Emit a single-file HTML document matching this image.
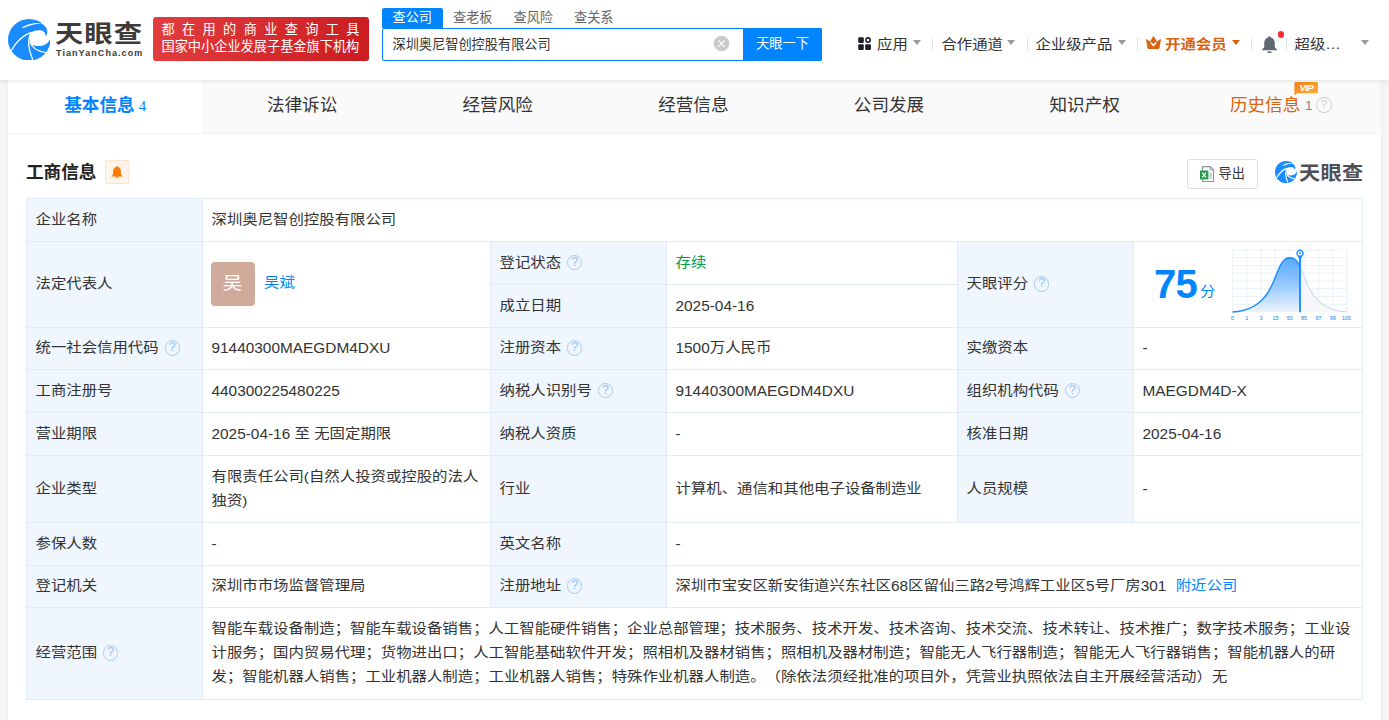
<!DOCTYPE html>
<html lang="zh-CN">
<head>
<meta charset="utf-8">
<title>天眼查</title>
<style>
*{box-sizing:border-box;margin:0;padding:0}
html,body{width:1389px;height:720px;overflow:hidden}
body{background:#f5f5f5;font-family:"Liberation Sans","Noto Sans CJK SC",sans-serif;font-size:15.4px;color:#333;position:relative;text-spacing-trim:space-all}
a{color:#0084ff;text-decoration:none}
.abs{position:absolute}
/* header */
#hd{position:absolute;left:0;top:0;width:1389px;height:80px;background:#fff;box-shadow:0 1px 4px rgba(0,0,0,.10);z-index:5}
#logo-txt{position:absolute;left:55px;top:16px;font-size:24px;line-height:36px;font-weight:700;color:#3e3a39;letter-spacing:.85px;white-space:nowrap;transform:scaleX(1.18);transform-origin:0 0}
#logo-sub{position:absolute;left:56px;top:47.3px;font-size:9px;line-height:12px;font-weight:700;color:#3e3a39;letter-spacing:1.07px;white-space:nowrap}
#slogan{position:absolute;left:153px;top:17px;width:216px;height:44px;border-radius:3px;background:linear-gradient(100deg,#e23d3f,#cb1c20);color:#fff;font-size:13.2px;line-height:17.6px;padding:3.5px 0 0 8.5px;white-space:nowrap}
#slogan .l1{letter-spacing:7.35px}
#slogan .l2{letter-spacing:0}
#stabs{position:absolute;left:382px;top:8px;height:20px;white-space:nowrap;font-size:13.2px;line-height:19px;color:#666}
#stabs span{display:inline-block;height:20px;width:60.5px;text-align:center}
#stabs span.on{background:#0084ff;color:#fff;border-radius:2px 2px 0 0}
#sbox{position:absolute;left:382px;top:28px;width:440px;height:33px;border:1px solid #0084ff;border-radius:2px;background:#fff}
#sbox .qq{position:absolute;left:9.5px;top:0;line-height:31px;font-size:13.2px;color:#333}
#sbox .btn{position:absolute;right:-1px;top:-1px;width:79px;height:33px;background:#0084ff;color:#fff;font-size:13.2px;line-height:32px;text-align:center;border-radius:0 2px 2px 0}
#nav{position:absolute;top:32.8px;left:0;height:24px;line-height:24px;font-size:15.4px;color:#333;white-space:nowrap}
#nav .it{position:absolute;top:0;white-space:nowrap;transform:scaleY(.89);transform-origin:50% 48%}
.caret{position:absolute;top:39.9px;width:0;height:0;border-left:4px solid transparent;border-right:4px solid transparent;border-top:5px solid #999}
.sep{position:absolute;top:38px;width:1px;height:13px;background:#e3e3e3}
/* container */
#wrap{position:absolute;left:8px;top:80px;width:1373px;height:640px;background:#fff;box-shadow:0 0 3px rgba(0,0,0,.05)}
#tabs{position:absolute;left:0;top:0;width:1373px;height:54px;background:#fafafa;border-bottom:1px solid #f3f3f3}
#tabs .t{position:absolute;top:0;height:53px;line-height:50px;font-size:17.6px;color:#333;text-align:center;width:195.65px;white-space:nowrap}
#tabs .t.on{background:#fff;color:#0084ff;font-weight:700;border-right:1px solid #f3f3f3}
#tabs .t .n{font-family:"Liberation Serif",serif;font-size:15.4px;font-weight:400;margin-left:4px}
#ttl{position:absolute;left:18px;top:80px;font-size:17.6px;font-weight:700;line-height:24px;color:#222;white-space:nowrap}
#bell{position:absolute;left:97px;top:80px;width:24px;height:24px;border:1px solid #ffe3cc;border-radius:2px;background:#fff4ea}
#exp{position:absolute;left:1179px;top:79px;width:71px;height:30px;border:1px solid #dedede;border-radius:2.5px;background:#fff;font-size:13.2px;line-height:28px;color:#333}
/* table */
table{position:absolute;left:18px;top:118px;width:1337px;border-collapse:collapse;table-layout:fixed;font-size:15.4px}
td{border:1px solid #e1ecf7;padding:0 8.5px;line-height:24.2px;color:#333;vertical-align:middle;overflow:hidden}
td.k{background:#eff6fe}
.q{display:inline-block;width:15.4px;height:15.4px;border:1.1px solid #a6cbf2;border-radius:50%;color:#93c0f0;font-size:12.5px;line-height:13.6px;text-align:center;vertical-align:middle;margin-left:6px;position:relative;top:-1.3px;font-family:"Liberation Sans",sans-serif}
.c{display:inline-block;transform:scaleY(.89);transform-origin:50% 48%}
.cm{transform:scaleY(.89);transform-origin:50% 50%;line-height:27.19px;position:relative;top:-.8px}
</style>

</head>
<body>
<div id="hd">
  <svg class="abs" style="left:7.8px;top:18.5px" width="42.4" height="41.7" viewBox="55 60 610 610" preserveAspectRatio="none"><circle cx="360" cy="365" r="305" fill="#1a8cff"/><path fill="#fff" d="M385,256 C440,222 520,212 562,240 C588,260 598,285 598,315 C640,250 625,170 528,122 L600,60 L720,200 L720,345 L662,343 C640,420 555,482 405,444 C368,405 360,330 385,256 Z"/><path fill="#fff" d="M250,188 C330,136 430,108 532,121 C440,132 350,156 272,192 Z"/><path fill="none" stroke="#fff" stroke-width="19" d="M100,525 C170,400 270,300 388,256"/><path fill="none" stroke="#fff" stroke-width="19" d="M386,256 C345,340 335,480 412,655"/><path fill="none" stroke="#fff" stroke-width="21" d="M372,395 C400,480 480,535 595,548"/></svg>
  <div id="logo-txt">天眼查</div>
  <div id="logo-sub">TianYanCha.com</div>
  <div id="slogan"><div class="l1">都在用的商业查询工具</div><div class="l2">国家中小企业发展子基金旗下机构</div></div>
  <div id="stabs"><span class="on">查公司</span><span>查老板</span><span>查风险</span><span>查关系</span></div>
  <div id="sbox"><div class="qq">深圳奥尼智创控股有限公司</div>
    <svg class="abs" style="left:330.3px;top:6px" width="17" height="17" viewBox="0 0 17 17"><circle cx="8.5" cy="8.5" r="7.8" fill="#cbcbcb"/><path d="M5.7,5.7L11.3,11.3M11.3,5.7L5.7,11.3" stroke="#fff" stroke-width="1.2" stroke-linecap="round"/></svg>
    <div class="btn">天眼一下</div></div>
  <svg class="abs" style="left:858px;top:36.8px" width="14" height="13.3" viewBox="0 0 14 13" preserveAspectRatio="none"><rect x="0.2" y="0.2" width="5.6" height="5.6" rx="1.2" fill="#1f1f29"/><rect x="0.2" y="7" width="5.6" height="5.6" rx="1.2" fill="#1f1f29"/><rect x="7.2" y="7" width="5.8" height="5.6" rx="1.2" fill="#1f1f29"/><circle cx="10.1" cy="3" r="2.1" fill="none" stroke="#1f1f29" stroke-width="1.6"/></svg>
  <div id="nav">
    <div class="it" style="left:877px">应用</div>
    <div class="it" style="left:941.4px">合作通道</div>
    <div class="it" style="left:1035.4px">企业级产品</div>
    <div class="it" style="left:1165px;color:#d9620f;font-weight:700">开通会员</div>
    <div class="it" style="left:1294.5px">超级…</div>
  </div>
  <div class="caret" style="left:913px"></div><div class="sep" style="left:932px"></div>
  <div class="caret" style="left:1007px"></div><div class="sep" style="left:1027px"></div>
  <div class="caret" style="left:1117.5px"></div><div class="sep" style="left:1137px"></div>
  <svg class="abs" style="left:1146.3px;top:36px" width="15" height="13.4" viewBox="0 0 15 13.4"><path d="M0.3,3.3 L4.2,5.8 L7.5,0.2 L10.8,5.8 L14.7,3.3 L13.3,12 Q13.2,13 12.2,13 L2.8,13 Q1.8,13 1.7,12 Z" fill="#d9620f" stroke="#d9620f" stroke-width=".5" stroke-linejoin="round"/><path d="M5.2,6.9 L7.5,9.6 L9.8,6.9" fill="none" stroke="#fff" stroke-width="1.6" stroke-linecap="round" stroke-linejoin="round"/></svg>
  <div class="caret" style="left:1231.5px;border-top-color:#d9620f"></div><div class="sep" style="left:1251px"></div>
  <svg class="abs" style="left:1261px;top:36px" width="17" height="17.5" viewBox="0 0 17 17.5"><path d="M8.5,0.3 C9.3,0.3 9.8,0.9 9.8,1.6 C12.4,2.3 13.8,4.5 13.8,7.2 L13.8,10.6 C13.8,11.8 14.8,12.6 16,13.4 L16,14.2 L1,14.2 L1,13.4 C2.2,12.6 3.2,11.8 3.2,10.6 L3.2,7.2 C3.2,4.5 4.6,2.3 7.2,1.6 C7.2,0.9 7.7,0.3 8.5,0.3 Z" fill="#5f6873"/><rect x="6.3" y="15.6" width="4.4" height="1.4" rx=".7" fill="#5f6873"/></svg>
  <div class="abs" style="left:1277.7px;top:31.3px;width:6.6px;height:6.6px;border-radius:50%;background:#ff2b2b"></div>
  <div class="sep" style="left:1286px"></div>
  <div class="caret" style="left:1361px"></div>
</div>
<div id="wrap">
  <div id="tabs">
    <div class="t on" style="left:0;width:195.5px">基本信息<span class="n">4</span></div>
    <div class="t" style="left:196.25px">法律诉讼</div>
    <div class="t" style="left:391.90px">经营风险</div>
    <div class="t" style="left:587.55px">经营信息</div>
    <div class="t" style="left:783.20px">公司发展</div>
    <div class="t" style="left:978.85px">知识产权</div>
    <div class="t" style="left:1221.9px;width:auto;color:#d9620f">历史信息</div>
    <div class="abs" style="left:1297px;top:16px;font-size:13.2px;line-height:20px;color:#888">1</div>
    <div class="abs" style="left:1308px;top:17.4px;width:15.8px;height:15.8px;border:1.2px solid #c9cfd6;border-radius:50%;color:#c9cfd6;font-size:11.5px;line-height:13.4px;text-align:center">?</div>
    <svg class="abs" style="left:1285.5px;top:2px" width="25" height="14" viewBox="0 0 25 14"><defs><linearGradient id="vg" x1="0" y1="0" x2="1" y2="1"><stop offset="0" stop-color="#f0831a"/><stop offset="1" stop-color="#ffb13d"/></linearGradient></defs><path d="M2,0 H22.5 a1.5,1.5 0 0 1 1.5,1.5 V9.8 a1.5,1.5 0 0 1 -1.5,1.5 H3.2 L0.4,13.6 V1.5 A1.5,1.5 0 0 1 2,0 Z" fill="url(#vg)"/><text x="12.3" y="9" font-family="Liberation Sans,sans-serif" font-size="9.5" font-weight="700" font-style="italic" fill="#fff" text-anchor="middle" letter-spacing="-.6">VIP</text></svg>
  </div>
  <div id="ttl">工商信息</div>
  <div id="bell"><svg class="abs" style="left:4.5px;top:4.6px" width="12" height="13" viewBox="0 0 12 13"><path d="M6,0.2 C6.6,0.2 7,0.6 7,1.1 C8.9,1.6 9.9,3.2 9.9,5.2 L9.9,7.8 C9.9,8.7 10.6,9.3 11.4,9.9 L11.4,10.6 L0.6,10.6 L0.6,9.9 C1.4,9.3 2.1,8.7 2.1,7.8 L2.1,5.2 C2.1,3.2 3.1,1.6 5,1.1 C5,0.6 5.4,0.2 6,0.2 Z" fill="#ff7a00"/><path d="M4.2,10.4 H7.8 C7.7,11.5 6.9,12.1 6,12.1 C5.1,12.1 4.3,11.5 4.2,10.4 Z" fill="#ff7a00"/></svg></div>
  <div id="exp">
    <svg class="abs" style="left:12px;top:5.5px" width="15" height="17" viewBox="0 0 15 17"><path d="M2.6,0.6 H10.2 L13.6,4 V15.5 H2.6 Z" fill="#fff" stroke="#8d939b" stroke-width="1.1" stroke-linejoin="round"/><path d="M10.2,0.6 V4 H13.6" fill="none" stroke="#8d939b" stroke-width=".9"/><path d="M9.4,7.9H12M9.4,9.9H12M9.4,12H12" stroke="#8d939b" stroke-width=".9"/><rect x="0" y="4.5" width="8.4" height="8.9" fill="#1e9b4b"/><path d="M2.3,6.6L6.1,11.3M6.1,6.6L2.3,11.3" stroke="#fff" stroke-width="1.3"/></svg>
    <span style="margin-left:30.5px">导出</span></div>
  <svg class="abs" style="left:1266.9px;top:81.1px" width="22" height="22.2" viewBox="55 60 610 610" preserveAspectRatio="none"><circle cx="360" cy="365" r="305" fill="#1a8cff"/><path fill="#fff" d="M385,256 C440,222 520,212 562,240 C588,260 598,285 598,315 C640,250 625,170 528,122 L600,60 L720,200 L720,345 L662,343 C640,420 555,482 405,444 C368,405 360,330 385,256 Z"/><path fill="#fff" d="M245,196 C330,130 430,100 535,120 C440,140 350,166 275,200 Z"/><path fill="none" stroke="#fff" stroke-width="30" d="M100,525 C170,400 270,300 388,256"/><path fill="none" stroke="#fff" stroke-width="30" d="M386,256 C345,340 335,480 412,655"/><path fill="none" stroke="#fff" stroke-width="32" d="M372,395 C400,480 480,535 595,548"/></svg>
  <div class="abs" style="left:1290.8px;top:80px;font-size:19.5px;line-height:26px;font-weight:700;color:#505057;white-space:nowrap;letter-spacing:.3px;transform:scaleX(1.085);transform-origin:0 0">天眼查</div>
  <table>
    <colgroup><col style="width:176px"><col style="width:288px"><col style="width:176px"><col style="width:291px"><col style="width:176px"><col style="width:229px"></colgroup>
    <tr style="height:43px"><td class="k"><span class="c">企业名称</span></td><td colspan="5"><span class="c">深圳奥尼智创控股有限公司</span></td></tr>
    <tr style="height:43px"><td class="k" rowspan="2"><span class="c">法定代表人</span></td><td rowspan="2"><div style="display:flex;align-items:center;position:relative;left:-1px;top:-1px"><div style="width:44px;height:44px;border-radius:4px;background:#d0ab9b;color:#fff;font-size:19.8px;line-height:42px;text-align:center;margin-right:9.5px;flex:none"><span class="c">吴</span></div><a><span class="c">吴斌</span></a></div></td><td class="k"><span class="c">登记状态</span><span class="q">?</span></td><td style="color:#089944"><span class="c">存续</span></td><td class="k" rowspan="2"><span class="c">天眼评分</span><span class="q">?</span></td><td rowspan="2" style="position:relative;padding:0">
      <div class="abs" style="left:20px;top:16px;font-size:40px;line-height:52px;font-weight:700;color:#0084ff;white-space:nowrap;letter-spacing:-.8px;font-family:'Liberation Sans',sans-serif">75</div>
      <div class="abs" style="left:66px;top:38px;font-size:15.4px;line-height:24px;color:#0084ff"><span class="c">分</span></div>
      <svg class="abs" style="left:91px;top:0" width="134" height="85" viewBox="1225 241.5 134 85">
        <defs><linearGradient id="cg" x1="0" y1="0" x2="0" y2="1"><stop offset="0" stop-color="#4da4ff"/><stop offset=".45" stop-color="#86c0fd"/><stop offset="1" stop-color="#e9f3fd"/></linearGradient>
        <clipPath id="cl"><rect x="1225" y="240" width="75" height="80"/></clipPath><clipPath id="cr"><rect x="1300" y="240" width="60" height="80"/></clipPath></defs>
        <g stroke="#e9f1fb" stroke-width="1" fill="none">
          <path d="M1232.4,249.3V311.6M1246.7,249.3V311.6M1261.1,249.3V311.6M1275.4,249.3V311.6M1289.8,249.3V311.6M1304.1,249.3V311.6M1318.4,249.3V311.6M1332.8,249.3V311.6M1347.1,249.3V311.6"/>
          <path d="M1232.4,249.3H1347.1M1232.4,257.1H1347.1M1232.4,264.9H1347.1M1232.4,272.7H1347.1M1232.4,280.5H1347.1M1232.4,288.2H1347.1M1232.4,296H1347.1M1232.4,303.8H1347.1"/>
        </g>
        <path d="M1232.4,311.5 C1247,310.5 1259,306 1268,292 C1278,276 1279,257.3 1289.9,257.3 C1300.8,257.3 1301.8,276 1311.8,292 C1320.8,306 1332.8,310.5 1347.1,311.5 Z" fill="#f3f4f6" fill-opacity=".6" clip-path="url(#cr)"/>
        <path d="M1232.4,311.5 C1247,310.5 1259,306 1268,292 C1278,276 1279,257.3 1289.9,257.3 C1300.8,257.3 1301.8,276 1311.8,292 C1320.8,306 1332.8,310.5 1347.1,311.5" fill="none" stroke="#c3d3e3" stroke-width="1" clip-path="url(#cr)"/>
        <path d="M1232.4,311.5 C1247,310.5 1259,306 1268,292 C1278,276 1279,257.3 1289.9,257.3 C1300.8,257.3 1301.8,276 1311.8,292 C1320.8,306 1332.8,310.5 1347.1,311.5 Z" fill="url(#cg)" fill-opacity=".92" clip-path="url(#cl)"/>
        <path d="M1232.4,311.5 C1247,310.5 1259,306 1268,292 C1278,276 1279,257.3 1289.9,257.3 C1300.8,257.3 1301.8,276 1311.8,292 C1320.8,306 1332.8,310.5 1347.1,311.5" fill="none" stroke="#1a8cff" stroke-width="1.4" clip-path="url(#cl)"/>
        <path d="M1300,257V311.8" stroke="#1a8cff" stroke-width="1.9"/>
        <path d="M1300,259.8 L1297,254.8 A3.6,3.6 0 1 1 1303,254.8 Z" fill="#1a8cff"/><circle cx="1300" cy="252.7" r="2.3" fill="#fff"/><circle cx="1300" cy="252.7" r="1" fill="#1a8cff"/>
        <g font-family="Liberation Sans,sans-serif" font-size="5.4" fill="#0a7ef5" text-anchor="middle"><text x="1232.4" y="319.6">0</text><text x="1246.7" y="319.6">1</text><text x="1261.1" y="319.6">3</text><text x="1275.4" y="319.6">15</text><text x="1289.8" y="319.6">50</text><text x="1304.1" y="319.6">85</text><text x="1318.4" y="319.6">97</text><text x="1332.8" y="319.6">99</text><text x="1346.5" y="319.6">100</text></g>
      </svg></td></tr>
    <tr style="height:43px"><td class="k"><span class="c">成立日期</span></td><td>2025-04-16</td></tr>
    <tr style="height:42px"><td class="k"><span class="c">统一社会信用代码</span><span class="q">?</span></td><td>91440300MAEGDM4DXU</td><td class="k"><span class="c">注册资本</span><span class="q">?</span></td><td>1500<span class="c">万人民币</span></td><td class="k"><span class="c">实缴资本</span></td><td>-</td></tr>
    <tr style="height:43px"><td class="k"><span class="c">工商注册号</span></td><td>440300225480225</td><td class="k"><span class="c">纳税人识别号</span><span class="q">?</span></td><td>91440300MAEGDM4DXU</td><td class="k"><span class="c">组织机构代码</span><span class="q">?</span></td><td>MAEGDM4D-X</td></tr>
    <tr style="height:43px"><td class="k"><span class="c">营业期限</span></td><td>2025-04-16 <span class="c">至</span> <span class="c">无固定期限</span></td><td class="k"><span class="c">纳税人资质</span></td><td>-</td><td class="k"><span class="c">核准日期</span></td><td>2025-04-16</td></tr>
    <tr style="height:67px"><td class="k"><span class="c">企业类型</span></td><td><div class="cm">有限责任公司(自然人投资或控股的法人独资)</div></td><td class="k"><span class="c">行业</span></td><td><span class="c">计算机、通信和其他电子设备制造业</span></td><td class="k"><span class="c">人员规模</span></td><td>-</td></tr>
    <tr style="height:43px"><td class="k"><span class="c">参保人数</span></td><td>-</td><td class="k"><span class="c">英文名称</span></td><td colspan="3">-</td></tr>
    <tr style="height:42px"><td class="k"><span class="c">登记机关</span></td><td><span class="c">深圳市市场监督管理局</span></td><td class="k"><span class="c">注册地址</span><span class="q">?</span></td><td colspan="3"><span class="c">深圳市宝安区新安街道兴东社区</span>68<span class="c">区留仙三路</span>2<span class="c">号鸿辉工业区</span>5<span class="c">号厂房</span>301 <a style="margin-left:5px"><span class="c">附近公司</span></a></td></tr>
    <tr style="height:92px"><td class="k"><span class="c">经营范围</span><span class="q">?</span></td><td colspan="5"><div class="cm">智能车载设备制造；智能车载设备销售；人工智能硬件销售；企业总部管理；技术服务、技术开发、技术咨询、技术交流、技术转让、技术推广；数字技术服务；工业设计服务；国内贸易代理；货物进出口；人工智能基础软件开发；照相机及器材销售；照相机及器材制造；智能无人飞行器制造；智能无人飞行器销售；智能机器人的研发；智能机器人销售；工业机器人制造；工业机器人销售；特殊作业机器人制造。（除依法须经批准的项目外，凭营业执照依法自主开展经营活动）无</div></td></tr>
  </table>
</div>
</body>
</html>
